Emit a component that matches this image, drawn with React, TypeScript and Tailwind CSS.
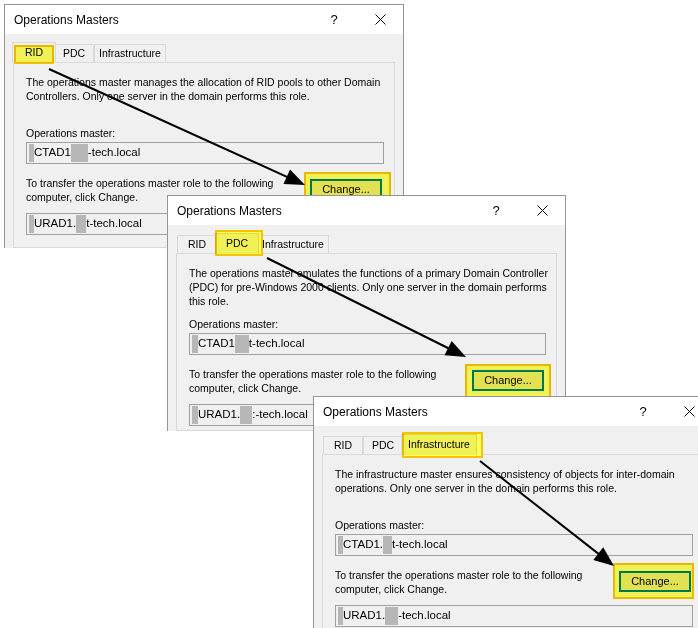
import React from 'react';

type Seg = { t?: string; b?: string };

interface DialogProps {
  pos: string;
  active: number;
  tabHl: string;
  lines: string[];
  master: Seg[];
  target: Seg[];
  btnHl: string;
}

const TABS = [
  { label: 'RID', w: 'w-[40px]', ws: 'w-[44px]' },
  { label: 'PDC', w: 'w-[40px]', ws: 'w-[44px]' },
  { label: 'Infrastructure', w: 'w-[72px]', ws: 'w-[76px]' },
];

// highlighter marks in the screenshot behave like a multiply blend
function Marker({ className }: { className: string }) {
  return (
    <div
      className={`absolute pointer-events-none mix-blend-multiply bg-[#ffff5c] border-2 border-[#f5c400] ${className}`}
    />
  );
}

function TextBox({ segs }: { segs: Seg[] }) {
  return (
    <div className="h-[22px] border border-[#a0a0a0] bg-[#f0f0f0] flex items-center pl-[2px] text-[11.5px] whitespace-nowrap overflow-hidden">
      {segs.map((s, i) =>
        s.t ? (
          <span key={i}>{s.t}</span>
        ) : (
          <span key={i} className={`inline-block h-[18px] bg-[#b7b7b7] blur-[0.4px] ${s.b}`} />
        )
      )}
    </div>
  );
}

function CloseIcon() {
  return (
    <svg width="11" height="11" viewBox="0 0 11 11">
      <path d="M0.5 0.5 L10.5 10.5 M10.5 0.5 L0.5 10.5" stroke="#000" strokeWidth="1" />
    </svg>
  );
}

function Dialog({ pos, active, tabHl, lines, master, target, btnHl }: DialogProps) {
  return (
    <div className={`absolute flex flex-col overflow-hidden border-x border-t border-[#959595] bg-[#f0f0f0] ${pos}`}>
      <div className="h-[29px] bg-white flex items-center shrink-0">
        <span className="flex-1 pl-[9px] text-[12px]">Operations Masters</span>
        <span className="w-[46px] text-center text-[13px]">?</span>
        <span className="w-[46px] flex justify-center">
          <CloseIcon />
        </span>
      </div>
      <div className="flex-1 flex flex-col pt-[8px] px-[8px]">
        <div className="h-[20px] flex items-end pl-[1px] shrink-0">
          {TABS.map((t, i) =>
            i === active ? (
              <div
                key={t.label}
                className={`relative z-10 -mx-[2px] -mb-px h-[21px] ${t.ws} border border-b-0 border-[#d9d9d9] bg-[#f0f0f0] flex items-center justify-center`}
              >
                {t.label}
                <Marker className={tabHl} />
              </div>
            ) : (
              <div
                key={t.label}
                className={`h-[18px] ${t.w} border border-b-0 border-[#d9d9d9] bg-[#f0f0f0] flex items-center justify-center`}
              >
                {t.label}
              </div>
            )
          )}
        </div>
        <div className="flex-1 border border-[#d9d9d9] bg-[#f0f0f0] pl-[12px] pr-[10px] pt-[12px]">
          <div className="h-[51px] leading-[14px]">
            {lines.map((l) => (
              <div key={l} className="whitespace-nowrap">
                {l}
              </div>
            ))}
          </div>
          <div className="leading-[14px]">Operations master:</div>
          <div className="mt-[2px]">
            <TextBox segs={master} />
          </div>
          <div className="mt-[12px] flex justify-between items-start">
            <div className="leading-[14px] whitespace-nowrap">
              <div>To transfer the operations master role to the following</div>
              <div>computer, click Change.</div>
            </div>
            <div className="relative mt-[3px] mr-[2px]">
              <div className="w-[72px] h-[21px] bg-[#e1e1e1] border-2 border-[#0078d7] flex items-center justify-center text-[11px]">
                Change...
              </div>
              <Marker className={btnHl} />
            </div>
          </div>
          <div className="mt-[9px]">
            <TextBox segs={target} />
          </div>
        </div>
      </div>
    </div>
  );
}

function arrow(x1: number, y1: number, x2: number, y2: number) {
  const dx = x2 - x1;
  const dy = y2 - y1;
  const len = Math.hypot(dx, dy);
  const ux = dx / len;
  const uy = dy / len;
  const hl = 20;
  const hw = 8;
  const bx = x2 - ux * hl;
  const by = y2 - uy * hl;
  return {
    x1,
    y1,
    bx: bx + ux * 2,
    by: by + uy * 2,
    head: `${x2},${y2} ${bx - uy * hw},${by + ux * hw} ${bx + uy * hw},${by - ux * hw}`,
  };
}

const ARROWS = [arrow(49, 69, 305, 185), arrow(267, 258, 466, 357), arrow(480, 461, 614, 566)];

export default function App() {
  return (
    <div className="relative w-[698px] h-[628px] overflow-hidden bg-white text-black text-[10.5px] font-['Liberation_Sans',Arial,sans-serif]">
      <Dialog
        pos="left-[4px] top-[4px] w-[400px] h-[244px] z-[1]"
        active={0}
        tabHl="left-[1px] top-[2px] w-[40px] h-[19px]"
        lines={[
          'The operations master manages the allocation of RID pools to other Domain',
          'Controllers. Only one server in the domain performs this role.',
        ]}
        master={[{ b: 'w-[5px]' }, { t: 'CTAD1' }, { b: 'w-[17px]' }, { t: '-tech.local' }]}
        target={[{ b: 'w-[5px]' }, { t: 'URAD1.' }, { b: 'w-[10px]' }, { t: 't-tech.local' }]}
        btnHl="-left-[6px] -right-[9px] -top-[7px] -bottom-[7px]"
      />
      <Dialog
        pos="left-[167px] top-[195px] w-[399px] h-[236px] z-[2]"
        active={1}
        tabHl="-left-[1px] -top-[4px] w-[48px] h-[26px]"
        lines={[
          'The operations master emulates the functions of a primary Domain Controller',
          '(PDC) for pre-Windows 2000 clients. Only one server in the domain performs',
          'this role.',
        ]}
        master={[{ b: 'w-[6px]' }, { t: 'CTAD1' }, { b: 'w-[14px]' }, { t: 't-tech.local' }]}
        target={[{ b: 'w-[6px]' }, { t: 'URAD1.' }, { b: 'w-[12px]' }, { t: ':-tech.local' }]}
        btnHl="-left-[7px] -right-[7px] -top-[6px] -bottom-[7px]"
      />
      <Dialog
        pos="left-[313px] top-[396px] w-[400px] h-[240px] z-[3]"
        active={2}
        tabHl="left-0 -top-[3px] w-[81px] h-[26px]"
        lines={[
          'The infrastructure master ensures consistency of objects for inter-domain',
          'operations. Only one server in the domain performs this role.',
        ]}
        master={[{ b: 'w-[5px]' }, { t: 'CTAD1.' }, { b: 'w-[9px]' }, { t: 't-tech.local' }]}
        target={[{ b: 'w-[5px]' }, { t: 'URAD1.' }, { b: 'w-[13px]' }, { t: '-tech.local' }]}
        btnHl="-left-[6px] -right-[3px] -top-[8px] -bottom-[7px]"
      />
      <svg className="absolute inset-0 z-[4] pointer-events-none" width="698" height="628">
        {ARROWS.map((a, i) => (
          <g key={i}>
            <line x1={a.x1} y1={a.y1} x2={a.bx} y2={a.by} stroke="#000" strokeWidth="2" />
            <polygon points={a.head} fill="#000" />
          </g>
        ))}
      </svg>
    </div>
  );
}
